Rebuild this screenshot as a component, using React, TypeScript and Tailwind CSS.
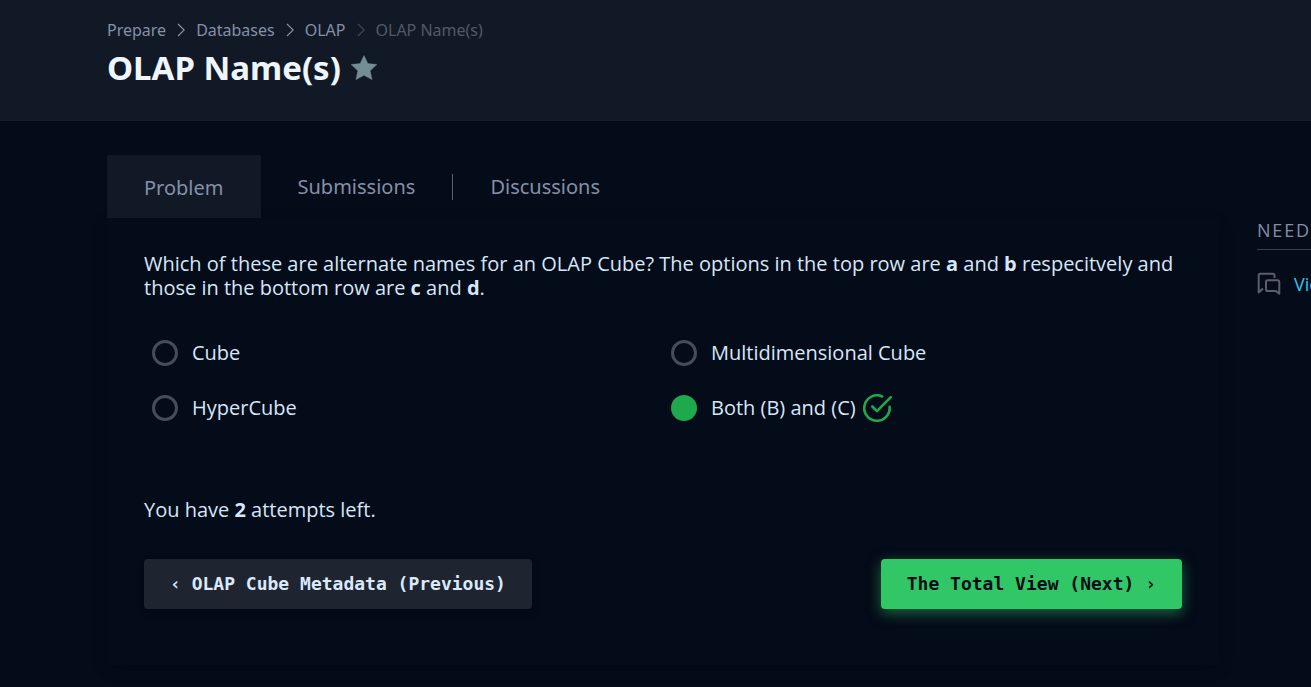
import { useState } from "react";

const crumbs = ["Prepare", "Databases", "OLAP"];
const options = ["Cube", "Multidimensional Cube", "HyperCube", "Both (B) and (C)"];
const correct = 3;

function Chevron() {
  return (
    <svg className="h-4 w-2" viewBox="0 0 8 16" fill="none" stroke="currentColor" strokeWidth="1.2" aria-hidden="true">
      <path d="M1 2l6.2 6L1 14" />
    </svg>
  );
}

function Star() {
  return (
    <svg className="h-7 w-7" viewBox="0 0 28 28" fill="#738f93" aria-hidden="true">
      <path d="M14 1.6l3.8 8 9 1-6.7 6.2 1.9 8.8L14 21.3l-8 4.3 1.9-8.8L1.2 10.600l9-1z" stroke="#738f93" strokeWidth="0.5" strokeLinejoin="round" />
    </svg>
  );
}

function CheckCircle() {
  return (
    <svg className="h-8 w-8" viewBox="0 0 32 32" fill="none" stroke="#1fa94d" strokeWidth="2.6" strokeLinecap="round" strokeLinejoin="round" aria-hidden="true">
      <path d="M21.200 4.500A12.700 12.700 0 1 0 28.600 14.700" />
      <path d="M11.300 14.500l4.700 4.700L29.800 5.200" />
    </svg>
  );
}

function Chats() {
  return (
    <svg className="h-6 w-6 shrink-0" viewBox="0 0 24 24" fill="none" stroke="#5a606b" strokeWidth="2" strokeLinejoin="round" aria-hidden="true">
      <path d="M17.500 6V3.500a1.800 1.800 0 0 0-1.800-1.800H3.500a1.800 1.800 0 0 0-1.800 1.800v17L6 16.500" />
      <path d="M10.800 8.200h9.700a1.800 1.800 0 0 1 1.800 1.800v11.800L18.800 19h-8a1.800 1.800 0 0 1-1.800-1.800V10a1.800 1.800 0 0 1 1.800-1.800z" />
    </svg>
  );
}

export default function App() {
  const [selected, setSelected] = useState(correct);

  return (
    <div className="min-h-screen overflow-hidden bg-[#040b19] font-['Open_Sans',sans-serif] text-xl/6 text-[#d7e7f8]">
      <header className="border-b border-[#171e2b] bg-[#121926] px-[107px] pt-[18px] pb-[30px]">
        <nav aria-label="Breadcrumb" className="flex items-center gap-[11px] font-['Noto_Sans',sans-serif] text-base/6 text-[#8490a6]">
          {crumbs.map((name, i) => (
            <div key={name} className="flex items-center gap-[11px]">
              <a href="#">{name}</a>
              <span className={i === 2 ? "text-[#414955]" : ""}>
                <Chevron />
              </span>
            </div>
          ))}
          <span className="text-[#515966]">OLAP Name(s)</span>
        </nav>
        <div className="flex items-center gap-[9px] pt-1">
          <h1 className="font-['Noto_Sans',sans-serif] text-[33px]/[44px] font-bold text-[#eff5fd]">OLAP Name(s)</h1>
          <button type="button" aria-label="Bookmark">
            <Star />
          </button>
        </div>
      </header>

      <div className="flex items-start gap-[38px] pt-[34px] pl-[107px]">
        <main className="min-w-0 flex-1">
          <nav aria-label="Sections" className="flex items-center font-['Noto_Sans',sans-serif] text-[#8490a6]">
            <a href="#" className="bg-[#121926] px-[37px] pt-[21px] pb-[19px] leading-[23px]">Problem</a>
            <a href="#" className="px-[37px] leading-[26px]">Submissions</a>
            <a href="#" className="border-l border-[#5c6370] px-[37px] leading-[26px]">Discussions</a>
          </nav>
          <section className="px-[37px] pt-[34px] pb-14 shadow-[0_4px_16px_rgba(0,0,0,0.1)]">
            <p>
              Which of these are alternate names for an OLAP Cube? The options in the top row are <b>a</b> and <b>b</b> respecitvely and those in the bottom row are <b>c</b> and <b>d</b>.
            </p>
            <form className="grid grid-cols-2 gap-y-[23px] pt-[37px]">
              {options.map((label, i) => (
                <label key={label} className="flex h-8 items-center pl-2">
                  <input
                    type="radio"
                    name="answer"
                    checked={selected === i}
                    onChange={() => setSelected(i)}
                    className="mr-[14px] h-[26px] w-[26px] appearance-none rounded-full border-[3px] border-[#454d5a] checked:border-[#1fa94d] checked:bg-[#1fa94d]"
                  />
                  <span className="mr-[5px]">{label}</span>
                  {i === correct && <CheckCircle />}
                </label>
              ))}
            </form>
            <p className="pt-[74px]">
              You have <b>2</b> attempts left.
            </p>
            <div className="flex items-center justify-between pt-[37px] font-['DejaVu_Sans_Mono',monospace] text-lg/[50px] font-bold">
              <button type="button" className="rounded-sm bg-[#1e2530] px-[26px] text-[#dbe9fa] shadow-[0_4px_8px_rgba(0,0,0,0.15)]">
                ‹ OLAP Cube Metadata (Previous)
              </button>
              <button type="button" className="rounded-sm bg-[#32c766] px-[26px] text-[#040b19] shadow-[0_4px_14px_rgba(50,199,102,0.5)]">
                The Total View (Next) ›
              </button>
            </div>
          </section>
        </main>

        <aside className="w-[54px] overflow-hidden pt-[63px] text-lg/6 whitespace-nowrap">
          <h2 className="border-b border-[#39404d] pb-[7px] tracking-widest text-[#8490a6]">NEED HELP?</h2>
          <a href="#" className="flex items-center gap-[13px] pt-[22px] text-[#32c5e8]">
            <Chats />
            View discussions
          </a>
        </aside>
      </div>
    </div>
  );
}
